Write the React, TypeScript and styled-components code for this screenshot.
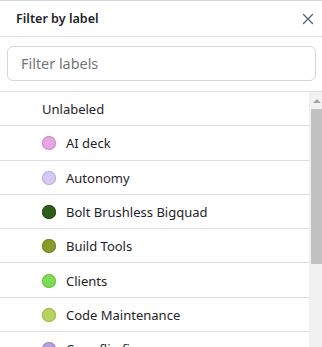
import styled, { createGlobalStyle } from 'styled-components'

const GlobalStyle = createGlobalStyle`
  html, body {
    margin: 0;
    padding: 0;
    background: #ffffff;
  }
  body {
    font-family: 'Noto Sans', 'Open Sans', sans-serif;
    color: #1f2328;
  }
`

interface ILabel {
  name: string
  color: string
  ring: string
}

const labels: ILabel[] = [
  { name: 'AI deck', color: '#e8a6e4', ring: '#cf8ccb' },
  { name: 'Autonomy', color: '#d7c9f6', ring: '#bcaee0' },
  { name: 'Bolt Brushless Bigquad', color: '#2e5e19', ring: '#244d12' },
  { name: 'Build Tools', color: '#889b2b', ring: '#758722' },
  { name: 'Clients', color: '#7fdb55', ring: '#6bc444' },
  { name: 'Code Maintenance', color: '#b6d25f', ring: '#9fbb4c' },
  { name: 'Crazyflie-firmware', color: '#b59edc', ring: '#9d86c6' },
  { name: 'Documentation', color: '#0e6fb8', ring: '#0b5c99' },
  { name: 'Driver', color: '#f3c26b', ring: '#d9a955' },
  { name: 'Hardware', color: '#d93f0b', ring: '#b93408' },
]

const Panel = styled.div`
  width: 322px;
  height: 347px;
  display: flex;
  flex-direction: column;
  overflow: hidden;
  border-top: 1px solid #d0d7de;
  box-sizing: border-box;
`

const Header = styled.div`
  display: flex;
  align-items: center;
  height: 35px;
  padding: 0 6px 0 16px;
  border-bottom: 1px solid #d8dee4;
  flex-shrink: 0;
`

const Title = styled.span`
  flex: 1;
  font-size: 12.6px;
  font-weight: 600;
  color: #1f2328;
`

const CloseButton = styled.button`
  display: flex;
  align-items: center;
  justify-content: center;
  width: 16px;
  height: 16px;
  padding: 0;
  border: none;
  background: none;
  color: #59636e;
  cursor: pointer;
`

const SearchBox = styled.div`
  padding: 9px 6px 10px 7px;
  border-bottom: 1px solid #d8dee4;
  flex-shrink: 0;
`

const SearchInput = styled.input`
  width: 100%;
  height: 35px;
  box-sizing: border-box;
  padding: 0 13px;
  border: 1px solid #d0d7de;
  border-radius: 6px;
  font-family: inherit;
  font-size: 14.4px;
  color: #1f2328;
  outline: none;

  ::placeholder {
    color: #6e7781;
  }
`

const ListArea = styled.div`
  flex: 1;
  display: flex;
  min-height: 0;
`

const Rows = styled.div`
  flex: 1;
  overflow: hidden;
`

const Row = styled.div`
  display: flex;
  align-items: center;
  gap: 10px;
  height: 34.3px;
  box-sizing: border-box;
  padding: 1px 0 0 42px;
  border-bottom: 1px solid #d8dee4;
  font-size: 13px;
  color: #1f2328;
`

const Dot = styled.span<{ $color: string; $ring: string }>`
  width: 14px;
  height: 14px;
  border-radius: 50%;
  background: ${(p) => p.$color};
  box-shadow: inset 0 0 0 1px ${(p) => p.$ring};
  flex-shrink: 0;
`

const ScrollBar = styled.div`
  width: 13px;
  flex-shrink: 0;
  display: flex;
  flex-direction: column;
  background: #f1f1f1;
`

const ScrollButton = styled.div`
  height: 17px;
  display: flex;
  align-items: center;
  justify-content: center;
  padding-left: 2px;
`

const ArrowUp = styled.span`
  width: 0;
  height: 0;
  border-left: 4px solid transparent;
  border-right: 4px solid transparent;
  border-bottom: 4px solid #a3a3a3;
`

const Thumb = styled.div`
  margin-left: 2px;
  height: 155px;
  background: #c1c1c1;
`

const App = () => {
  return (
    <Panel>
      <GlobalStyle />
      <Header>
        <Title>Filter by label</Title>
        <CloseButton aria-label="Close">
          <svg width="12" height="12" viewBox="0 0 12 12" fill="none">
            <path d="M1.5 1.5l9 9M10.5 1.5l-9 9" stroke="currentColor" strokeWidth="1.3" strokeLinecap="round" />
          </svg>
        </CloseButton>
      </Header>
      <SearchBox>
        <SearchInput placeholder="Filter labels" />
      </SearchBox>
      <ListArea>
        <Rows>
          <Row>Unlabeled</Row>
          {labels.map((label) => (
            <Row key={label.name}>
              <Dot $color={label.color} $ring={label.ring} />
              {label.name}
            </Row>
          ))}
        </Rows>
        <ScrollBar>
          <ScrollButton>
            <ArrowUp />
          </ScrollButton>
          <Thumb />
        </ScrollBar>
      </ListArea>
    </Panel>
  )
}

export default App
